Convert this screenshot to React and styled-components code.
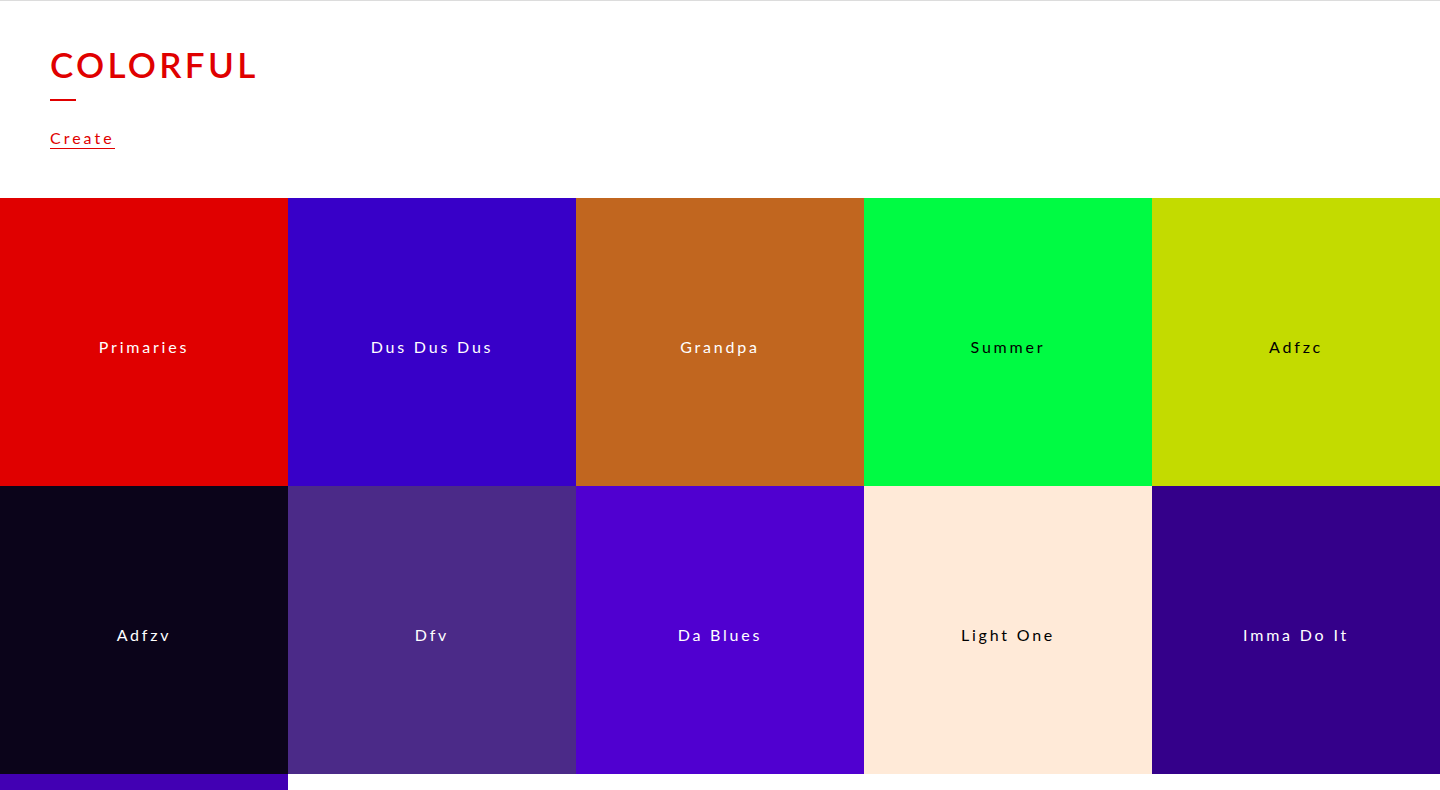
import React from "react";
import styled, { createGlobalStyle } from "styled-components";

const Global = createGlobalStyle`
  html, body { margin: 0; padding: 0; background: #fff; }
  body { font-family: "Lato", "Noto Sans", sans-serif; }
  * { box-sizing: border-box; }
`;

const Page = styled.div`
  border-top: 1px solid #dcdcdc;
`;

const Header = styled.header`
  height: 197px;
  padding: 43px 50px 0;
  display: flex;
  flex-direction: column;
  align-items: flex-start;
`;

const Title = styled.h1`
  margin: 0;
  font-size: 35px;
  line-height: 40px;
  font-weight: 600;
  letter-spacing: 3.3px;
  color: #e00000;
`;

const Bar = styled.div`
  width: 26px;
  height: 2px;
  background: #e00000;
  margin-top: 15px;
`;

const CreateLink = styled.a`
  margin-top: 28px;
  font-size: 16px;
  line-height: 18px;
  letter-spacing: 3px;
  color: #e00000;
  text-decoration: none;
  border-bottom: 1px solid #e00000;
  padding-bottom: 1px;
  cursor: pointer;
`;

const Grid = styled.div`
  display: grid;
  grid-template-columns: repeat(5, 1fr);
  grid-auto-rows: 288px;
`;

const Tile = styled.div`
  background: ${(p) => p.$bg};
  color: ${(p) => (p.$light ? "#000" : "#fff")};
  display: flex;
  align-items: center;
  justify-content: center;
  padding-top: 8px;
  font-size: 16px;
  letter-spacing: 2.8px;
`;

const palettes = [
  { name: "Primaries", bg: "#e00000" },
  { name: "Dus Dus Dus", bg: "#3800c8" },
  { name: "Grandpa", bg: "#c1661f" },
  { name: "Summer", bg: "#00fb43", light: true },
  { name: "Adfzc", bg: "#c3db00", light: true },
  { name: "Adfzv", bg: "#0b041a" },
  { name: "Dfv", bg: "#4b2a88" },
  { name: "Da Blues", bg: "#5000d0" },
  { name: "Light One", bg: "#ffead8", light: true },
  { name: "Imma Do It", bg: "#34008a" },
  { name: "", bg: "#4200b3" },
];

export default function App() {
  return (
    <Page>
      <Global />
      <Header>
        <Title>COLORFUL</Title>
        <Bar />
        <CreateLink>Create</CreateLink>
      </Header>
      <Grid>
        {palettes.map((p, i) => (
          <Tile key={i} $bg={p.bg} $light={p.light}>
            {p.name}
          </Tile>
        ))}
      </Grid>
    </Page>
  );
}
